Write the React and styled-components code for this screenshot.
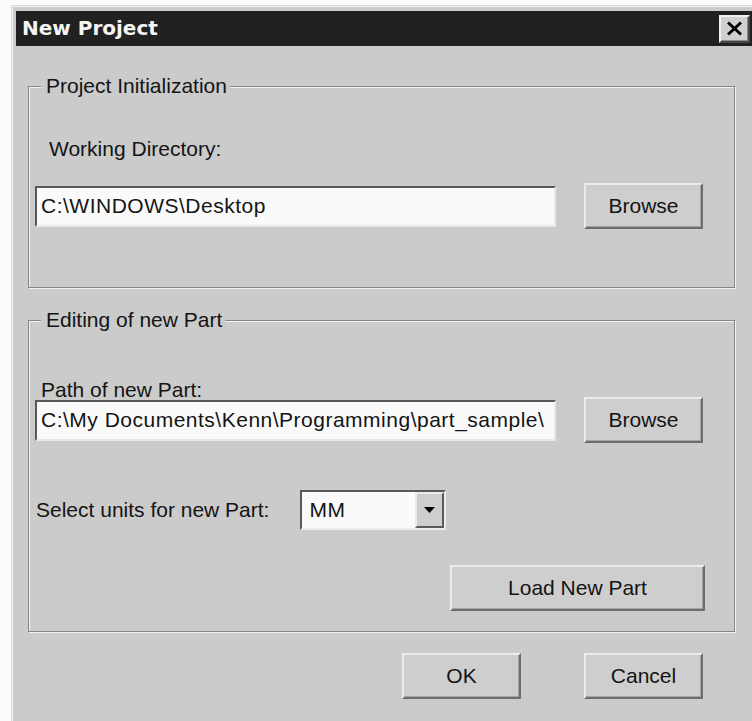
import styled, { createGlobalStyle } from 'styled-components'

const GlobalStyle = createGlobalStyle`
  html, body {
    margin: 0;
    padding: 0;
    background: #fbfbfb;
    overflow: hidden;
  }
  body {
    font-family: "Liberation Sans", Arial, sans-serif;
    color: #141414;
  }
`

const FACE = '#cbcbcb'

const Dialog = styled.div`
  margin: 5px 0 0 11px;
  width: 741px;
  height: 716px;
  box-sizing: border-box;
  padding: 5px 0 0 4px;
  background: ${FACE};
  border-top: 1px solid #d9d9d9;
  border-left: 1px solid #d9d9d9;
  box-shadow: inset 1px 1px 0 #f2f2f2;
  overflow: hidden;
`

const TitleBar = styled.div`
  display: flex;
  align-items: center;
  justify-content: space-between;
  height: 35px;
  padding: 0 2px 0 6px;
  background: #212121;
`

const Title = styled.span`
  font: bold 20px/35px "DejaVu Sans", Verdana, sans-serif;
  color: #f5f5f5;
`

const CloseButton = styled.button`
  display: flex;
  align-items: center;
  justify-content: center;
  width: 31px;
  height: 28px;
  padding: 0;
  background: #d0d0d0;
  border: 2px solid;
  border-color: #f0f0f0 #474747 #474747 #f0f0f0;
  box-shadow: inset -1px -1px 0 #8c8c8c;
`

const Body = styled.div`
  display: flex;
  flex-direction: column;
  padding: 28px 0 0 12px;
`

const GroupBox = styled.fieldset`
  margin: ${p => p.$top}px 0 0;
  padding: 0;
  width: 707px;
  min-width: 0;
  box-sizing: border-box;
  border: 1px solid #858585;
  box-shadow: inset 1px 1px 0 #f3f3f3, 1px 1px 0 #f3f3f3;
`

const Legend = styled.legend`
  margin-left: 12px;
  padding: 0 3px 0 5px;
  font-size: 21px;
  line-height: 24px;
  background: ${FACE};
`

const GroupInner = styled.div`
  display: flex;
  flex-direction: column;
  align-items: flex-start;
  padding: ${p => p.$pad};
`

const Label = styled.div`
  margin: ${p => p.$m};
  font-size: 21px;
  line-height: 20px;
  white-space: nowrap;
`

const Row = styled.div`
  display: flex;
  align-items: center;
  gap: ${p => p.$gap}px;
  margin: ${p => p.$m};
`

const TextField = styled.input`
  width: 521px;
  height: 41px;
  box-sizing: border-box;
  padding: 0 4px;
  border: 2px solid;
  border-color: #595959 #e8e8e8 #e8e8e8 #595959;
  background: #fafafa;
  font: 21px "Liberation Sans", Arial, sans-serif;
  letter-spacing: 0.5px;
  color: #141414;
  outline: none;
`

const Button = styled.button`
  width: ${p => p.$w}px;
  height: 46px;
  padding: 0;
  margin: ${p => p.$m || '0'};
  align-self: ${p => p.$self || 'auto'};
  background: #cecece;
  border: 2px solid;
  border-color: #ebebeb #6d6d6d #6d6d6d #ebebeb;
  box-shadow: inset -1px -1px 0 #a3a3a3;
  font: 21px "Liberation Sans", Arial, sans-serif;
  color: #141414;
`

const Combo = styled.div`
  display: flex;
  width: 146px;
  height: 40px;
  box-sizing: border-box;
  border: 2px solid;
  border-color: #595959 #ececec #ececec #595959;
  background: #fafafa;
`

const ComboValue = styled.div`
  flex: 1;
  padding-left: 7px;
  font-size: 21px;
  line-height: 36px;
  letter-spacing: 0.5px;
`

const ComboArrow = styled.div`
  display: flex;
  align-items: center;
  justify-content: center;
  width: 29px;
  box-sizing: border-box;
  background: #cecece;
  border: 2px solid;
  border-color: #ebebeb #5a5a5a #5a5a5a #ebebeb;
`

const Footer = styled.div`
  display: flex;
  justify-content: flex-end;
  gap: 63px;
  width: 707px;
  box-sizing: border-box;
  padding-right: 32px;
  margin-top: 21px;
`

const CloseIcon = () => (
  <svg width="17" height="15" viewBox="0 0 17 15">
    <path d="M2 1.5 L15 13.5 M15 1.5 L2 13.5" stroke="#000" strokeWidth="3" />
  </svg>
)

const DownArrow = () => (
  <svg width="11" height="6" viewBox="0 0 11 6">
    <path d="M0 0 H11 L5.5 6 Z" fill="#000" />
  </svg>
)

const App = () => {
  return (
    <>
      <GlobalStyle />
      <Dialog>
        <TitleBar>
          <Title>New Project</Title>
          <CloseButton><CloseIcon /></CloseButton>
        </TitleBar>
        <Body>
          <GroupBox $top={0}>
            <Legend>Project Initialization</Legend>
            <GroupInner $pad="41px 0 58px">
              <Label $m="0 0 0 20px">Working Directory:</Label>
              <Row $gap={28} $m="24px 0 0 6px">
                <TextField readOnly defaultValue="C:\WINDOWS\Desktop" />
                <Button $w={119}>Browse</Button>
              </Row>
            </GroupInner>
          </GroupBox>

          <GroupBox $top={20}>
            <Legend>Editing of new Part</Legend>
            <GroupInner $pad="48px 0 20px">
              <Label $m="0 0 -3px 12px">Path of new Part:</Label>
              <Row $gap={28} $m="0 0 0 6px">
                <TextField readOnly defaultValue="C:\My Documents\Kenn\Programming\part_sample\" />
                <Button $w={119}>Browse</Button>
              </Row>
              <Row $gap={31} $m="47px 0 0 7px">
                <Label $m="0">Select units for new Part:</Label>
                <Combo>
                  <ComboValue>MM</ComboValue>
                  <ComboArrow><DownArrow /></ComboArrow>
                </Combo>
              </Row>
              <Button $w={255} $self="flex-end" $m="35px 29px 0 0">Load New Part</Button>
            </GroupInner>
          </GroupBox>

          <Footer>
            <Button $w={119}>OK</Button>
            <Button $w={119}>Cancel</Button>
          </Footer>
        </Body>
      </Dialog>
    </>
  )
}

export default App
